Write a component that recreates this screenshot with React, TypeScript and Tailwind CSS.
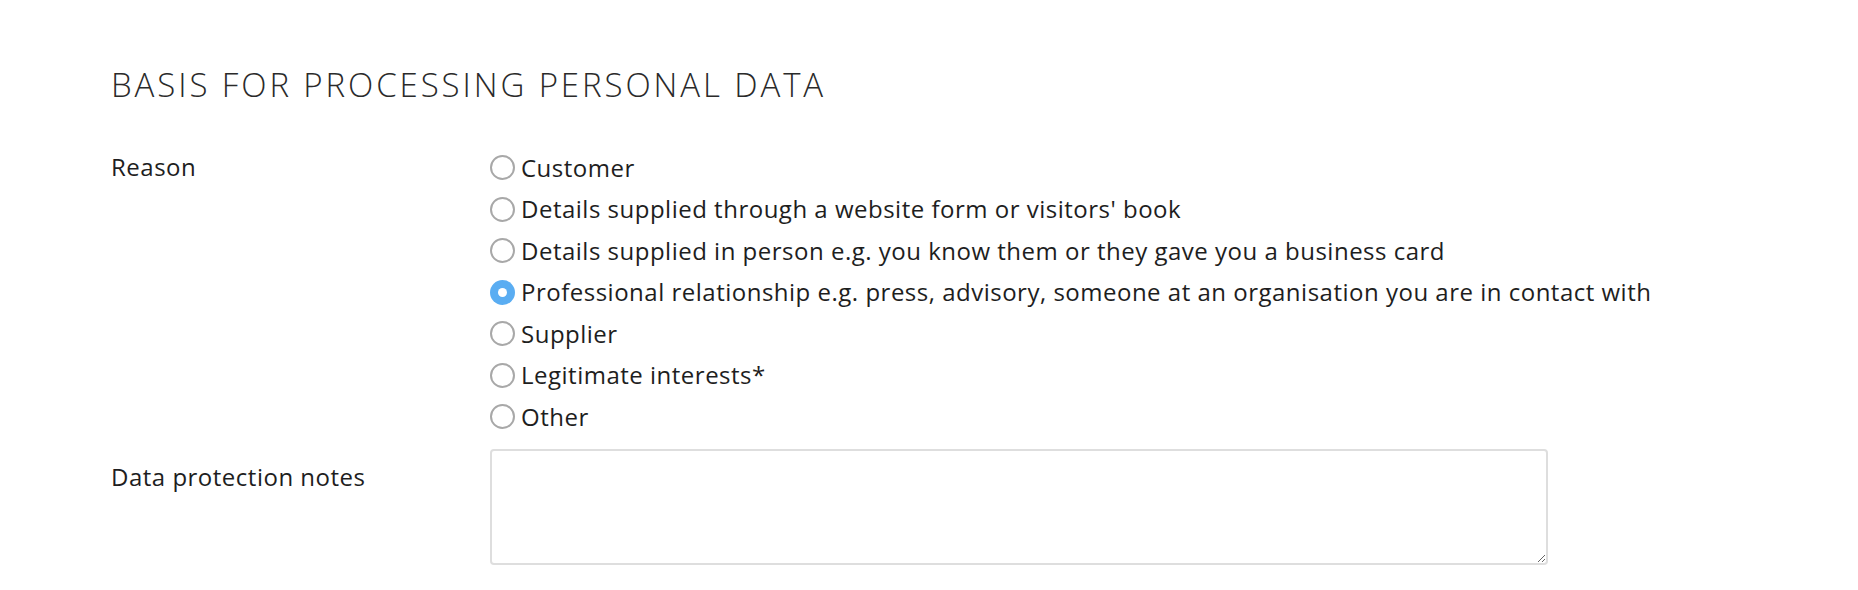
import React from "react";

const options = [
  "Customer",
  "Details supplied through a website form or visitors' book",
  "Details supplied in person e.g. you know them or they gave you a business card",
  "Professional relationship e.g. press, advisory, someone at an organisation you are in contact with",
  "Supplier",
  "Legitimate interests*",
  "Other",
];

function Radio({ checked }: { checked: boolean }) {
  return checked ? (
    <span className="flex h-[25px] w-[25px] shrink-0 items-center justify-center rounded-full bg-[#5aadf2]">
      <span className="h-[9px] w-[9px] rounded-full bg-white" />
    </span>
  ) : (
    <span className="h-[25px] w-[25px] shrink-0 rounded-full border-2 border-[#a8a8a8] bg-white" />
  );
}

export default function App() {
  return (
    <div
      className="min-h-[590px] w-full bg-white pl-[111px] pt-[60px] text-[#1e1e1e]"
      style={{ fontFamily: "'Open Sans', Lato, sans-serif" }}
    >
      <h1 className="whitespace-nowrap text-[33px] font-light leading-[50px] tracking-[2.9px] text-[#2a2a2a]">
        BASIS FOR PROCESSING PERSONAL DATA
      </h1>
      <div className="mt-[37px] grid grid-cols-[379px_1058px]">
        <div className="pt-[4px] text-[24px] leading-[32px] tracking-[0.5px]">Reason</div>
        <div className="flex flex-col">
          {options.map((o, i) => (
            <label
              key={i}
              className="flex h-[41.5px] items-center gap-[6px] whitespace-nowrap text-[24px] tracking-[0.5px]"
            >
              <Radio checked={i === 3} />
              <span className="leading-[32px]">{o}</span>
            </label>
          ))}
        </div>
        <div className="pt-[23px] text-[24px] leading-[32px] tracking-[0.5px]">Data protection notes</div>
        <div className="pt-[11px]">
          <textarea className="block h-[116px] w-[1058px] resize-y rounded-[4px] border-2 border-[#dedede] bg-white outline-none" />
        </div>
      </div>
    </div>
  );
}
